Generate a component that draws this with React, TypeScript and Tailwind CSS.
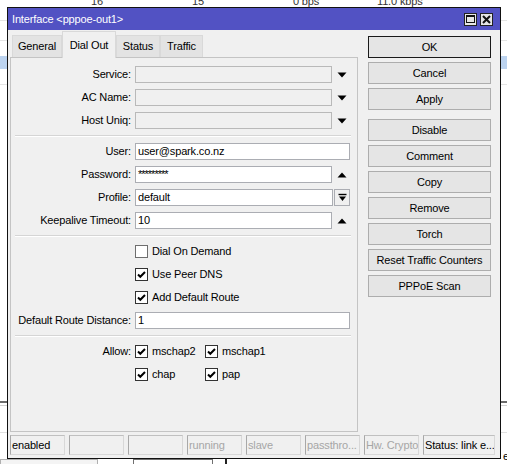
import React from "react";

const FONT = "font-['Liberation_Sans',Arial,sans-serif] text-[11px] tracking-[-0.15px]";

function DownTri() {
  return (
    <svg width="10" height="6" viewBox="0 0 10 6">
      <path d="M0.5 0.5 L9.5 0.5 L5 5.5 Z" fill="#000" />
    </svg>
  );
}
function UpTri() {
  return (
    <svg width="10" height="6" viewBox="0 0 10 6">
      <path d="M0.5 5.5 L9.5 5.5 L5 0.5 Z" fill="#000" />
    </svg>
  );
}

function Input({ value, disabled, className = "" }: { value?: string; disabled?: boolean; className?: string }) {
  return (
    <div
      className={`h-[17px] flex-1 border px-[2px] leading-[15px] whitespace-nowrap overflow-hidden ${
        disabled ? "border-[#b9b9b9] bg-[#f0f0f0]" : "border-[#abadb3] bg-white"
      } ${className}`}
    >
      {value}
    </div>
  );
}

function Row({ label, children }: { label: string; children: React.ReactNode }) {
  return (
    <div className="flex h-[23px] items-center">
      <div className="w-[116px] text-right whitespace-nowrap">{label}</div>
      <div className="ml-[4px] flex w-[215px] items-center">{children}</div>
    </div>
  );
}

function Sep() {
  return (
    <div className="flex h-[8px] items-center">
      <div className="h-0 w-full border-t border-[#d5d5d5] border-b border-b-white" />
    </div>
  );
}

function Check({ checked }: { checked: boolean }) {
  return (
    <div
      className={`flex h-[13px] w-[13px] shrink-0 items-center justify-center border bg-white ${
        checked ? "border-[#333]" : "border-[#6e6e6e]"
      }`}
    >
      {checked && (
        <svg width="11" height="11" viewBox="0 0 11 11">
          <path d="M2 5.5 L4.3 7.8 L9 3" stroke="#000" strokeWidth="2" fill="none" />
        </svg>
      )}
    </div>
  );
}

function CheckItem({ checked, label, w }: { checked: boolean; label: string; w?: string }) {
  return (
    <div className={`flex items-center gap-[4px] ${w ?? ""}`}>
      <Check checked={checked} />
      <span className="whitespace-nowrap">{label}</span>
    </div>
  );
}

function Btn({ label, primary, mt }: { label: string; primary?: boolean; mt: string }) {
  return (
    <div
      className={`${mt} flex h-[22px] items-center justify-center border bg-[#e5e5e5] whitespace-nowrap ${
        primary ? "border-[#1a1a1a]" : "border-[#adadad]"
      }`}
    >
      {label}
    </div>
  );
}

function Cell({ text, dim, w }: { text?: string; dim?: boolean; w: string }) {
  return (
    <div
      className={`${w} h-[20px] border border-[#d8d8d8] border-l-[#a8a8a8] border-t-[#c0c0c0] px-[1px] leading-[18px] whitespace-nowrap overflow-hidden ${
        dim ? "text-[#a6a6a6]" : "text-black"
      }`}
    >
      {text}
    </div>
  );
}

export default function App() {
  return (
    <div className={`relative h-[464px] w-[507px] overflow-hidden bg-white text-black ${FONT}`}>
      {/* background table */}
      <div className="absolute left-0 top-[-7px] h-[14px] w-full text-[#333]">
        <span className="absolute left-[91px]">16</span>
        <span className="absolute left-[192px]">15</span>
        <span className="absolute left-[293px]">0 bps</span>
        <span className="absolute left-[377px]">11.0 kbps</span>
      </div>
      <div className="absolute left-0 top-[20px] h-px w-full bg-[#e4e4e4]" />
      <div className="absolute left-0 top-[40px] h-px w-full bg-[#e4e4e4]" />
      <div className="absolute left-0 top-[56px] h-[13px] w-full bg-[#bcd3ef]" />
      <div className="absolute left-0 top-[84px] h-px w-full bg-[#e4e4e4]" />
      <div className="absolute left-0 top-[401px] h-[2px] w-full bg-[#6a6a6a]" />
      <div className="absolute left-0 top-[405px] h-px w-full bg-[#d0d0d0]" />
      <div className="absolute left-0 top-[432px] h-px w-full bg-[#e0e0e0]" />
      <div className="absolute left-0 top-[459px] h-[8px] w-[98px] border border-[#b0b0b0] bg-[#f4f4f4]" />
      <div className="absolute left-[133px] top-[459px] h-[8px] w-[80px] border border-[#707070] bg-white" />
      <div className="absolute left-[225px] top-[455px] h-[10px] w-[2px] bg-[#222]" />
      <span className="absolute left-[503px] top-[448px]">er</span>

      {/* window */}
      <div className="absolute left-[7px] top-[7px] flex h-[452px] w-[494px] flex-col border border-[#111] bg-[#f0f0f0]">
        {/* title bar */}
        <div className="flex h-[22px] shrink-0 items-center bg-[#5252c3] pl-[4px] pr-[7px] text-white">
          <span className="flex-1 text-[11px] whitespace-nowrap">Interface &lt;pppoe-out1&gt;</span>
          <div className="flex gap-[3px]">
            <div className="flex h-[13px] w-[13px] items-center justify-center border border-[#222] bg-[#e6e6e6]">
              <div className="h-[8px] w-[9px] border border-[#111] border-t-2" />
            </div>
            <div className="flex h-[13px] w-[13px] items-center justify-center border border-[#222] bg-[#e6e6e6]">
              <svg width="9" height="9" viewBox="0 0 9 9">
                <path d="M1 1 L8 8 M8 1 L1 8" stroke="#111" strokeWidth="2" />
              </svg>
            </div>
          </div>
        </div>

        {/* body */}
        <div className="flex h-[402px] shrink-0">
          {/* left column */}
          <div className="ml-[2px] flex w-[348px] flex-col">
            <div className="flex h-[27px] shrink-0 items-end pl-[2px]">
              <div className="flex h-[22px] w-[50px] items-center justify-center border border-b-0 border-[#d9d9d9] bg-[#e3e3e3]">
                General
              </div>
              <div className="relative z-10 -mb-px flex h-[27px] w-[54px] items-start justify-center border border-b-0 border-[#d9d9d9] bg-[#f0f0f0] pt-[5px]">
                Dial Out
              </div>
              <div className="flex h-[22px] w-[44px] items-center justify-center border border-b-0 border-[#d9d9d9] bg-[#e3e3e3]">
                Status
              </div>
              <div className="flex h-[22px] w-[43px] items-center justify-center border border-b-0 border-[#d9d9d9] bg-[#e3e3e3]">
                Traffic
              </div>
            </div>
            <div className="flex-1 border border-[#c4c4c4] pl-[4px] pr-[6px] pt-[5px]">
              <Row label="Service:">
                <Input disabled />
                <div className="flex w-[18px] justify-center pl-[2px]"><DownTri /></div>
              </Row>
              <Row label="AC Name:">
                <Input disabled />
                <div className="flex w-[18px] justify-center pl-[2px]"><DownTri /></div>
              </Row>
              <Row label="Host Uniq:">
                <Input disabled />
                <div className="flex w-[18px] justify-center pl-[2px]"><DownTri /></div>
              </Row>
              <Sep />
              <Row label="User:">
                <Input value="user@spark.co.nz" />
              </Row>
              <Row label="Password:">
                <Input value="*********" className="tracking-[-1px]" />
                <div className="flex w-[18px] justify-center pl-[2px]"><UpTri /></div>
              </Row>
              <Row label="Profile:">
                <Input value="default" />
                <div className="ml-[1px] flex h-[17px] w-[16px] items-center justify-center border border-[#abadb3] bg-[#f0f0f0]">
                  <svg width="9" height="9" viewBox="0 0 9 9">
                    <path d="M0.5 1.5 L8.5 1.5" stroke="#000" strokeWidth="1.4" />
                    <path d="M1 3.5 L8 3.5 L4.5 8 Z" fill="#000" />
                  </svg>
                </div>
              </Row>
              <Row label="Keepalive Timeout:">
                <Input value="10" />
                <div className="flex w-[18px] justify-center pl-[2px]"><UpTri /></div>
              </Row>
              <Sep />
              <div className="flex h-[23px] items-center pl-[120px]">
                <CheckItem checked={false} label="Dial On Demand" />
              </div>
              <div className="flex h-[23px] items-center pl-[120px]">
                <CheckItem checked label="Use Peer DNS" />
              </div>
              <div className="flex h-[23px] items-center pl-[120px]">
                <CheckItem checked label="Add Default Route" />
              </div>
              <Row label="Default Route Distance:">
                <Input value="1" />
              </Row>
              <Sep />
              <Row label="Allow:">
                <CheckItem checked label="mschap2" w="w-[70px]" />
                <CheckItem checked label="mschap1" />
              </Row>
              <div className="flex h-[23px] items-center pl-[120px]">
                <CheckItem checked label="chap" w="w-[70px]" />
                <CheckItem checked label="pap" />
              </div>
            </div>
          </div>

          {/* right buttons */}
          <div className="ml-[10px] flex w-[123px] flex-col">
            <Btn label="OK" primary mt="mt-[6px]" />
            <Btn label="Cancel" mt="mt-[4px]" />
            <Btn label="Apply" mt="mt-[4px]" />
            <Btn label="Disable" mt="mt-[9px]" />
            <Btn label="Comment" mt="mt-[4px]" />
            <Btn label="Copy" mt="mt-[4px]" />
            <Btn label="Remove" mt="mt-[4px]" />
            <Btn label="Torch" mt="mt-[4px]" />
            <Btn label="Reset Traffic Counters" mt="mt-[4px]" />
            <Btn label="PPPoE Scan" mt="mt-[4px]" />
          </div>
        </div>

        {/* status bar */}
        <div className="flex gap-[4px] pl-[2px] pt-[3px]">
          <Cell w="w-[55px]" text="enabled" />
          <Cell w="w-[55px]" />
          <Cell w="w-[55px]" />
          <Cell w="w-[55px]" text="running" dim />
          <Cell w="w-[55px]" text="slave" dim />
          <Cell w="w-[55px]" text="passthro..." dim />
          <Cell w="w-[55px]" text="Hw. Crypto" dim />
          <Cell w="w-[72px]" text="Status: link e..." />
        </div>
      </div>
    </div>
  );
}
